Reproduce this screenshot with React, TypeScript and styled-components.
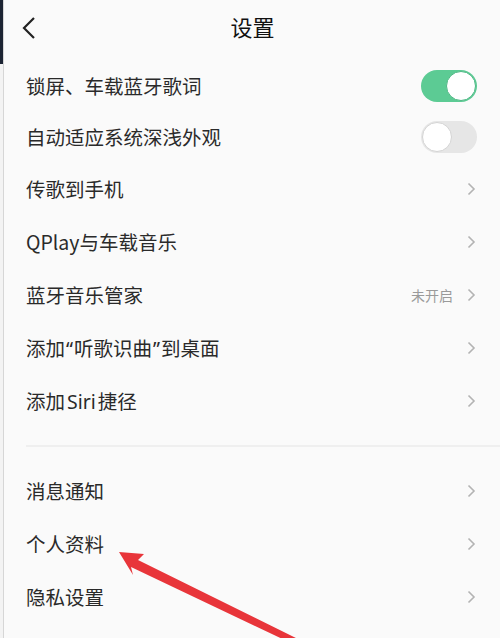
import styled, { createGlobalStyle } from "styled-components";

const GlobalStyle = createGlobalStyle`
  html, body {
    margin: 0;
    padding: 0;
    background: #fafafa;
  }
  body {
    font-family: "Noto Sans CJK SC", "Noto Sans", sans-serif;
  }
`;

const Screen = styled.div`
  position: relative;
  width: 500px;
  height: 638px;
  overflow: hidden;
  display: flex;
  background: #fafafa;
`;

const EdgeStrip = styled.div`
  width: 3px;
  flex-shrink: 0;
  display: flex;
  flex-direction: column;
  background: #f3f3f3;
  border-right: 1px solid #d6d6d6;
`;

const EdgeDark = styled.div`
  height: 64px;
  background: #1c2433;
`;

const Page = styled.div`
  flex: 1;
  display: flex;
  flex-direction: column;
`;

const Header = styled.div`
  height: 60px;
  padding-bottom: 8px;
  box-sizing: border-box;
  display: grid;
  grid-template-columns: 60px 1fr 60px;
  align-items: center;
`;

const Back = styled.div`
  padding-left: 17px;
  padding-top: 4px;
  display: flex;
  align-items: center;
`;

const Title = styled.div`
  text-align: center;
  font-size: 22px;
  color: #111;
  padding-left: 1px;
`;

const List = styled.div`
  display: flex;
  flex-direction: column;
`;

const Row = styled.div<{ $h?: number }>`
  height: ${(p) => p.$h ?? 53}px;
  display: flex;
  align-items: center;
  justify-content: space-between;
  padding: 0 24px 0 22px;
`;

const Label = styled.span`
  font-size: 19.5px;
  color: #2a2a2a;
`;

const Latin = styled.span`
  font-family: "Noto Sans", sans-serif;
  margin: 0 2px;
`;

const Quote = styled.span`
  font-family: "Noto Sans", sans-serif;
  margin: 0 1px;
`;

const Right = styled.div`
  display: flex;
  align-items: center;
  gap: 14px;
`;

const Hint = styled.span`
  font-size: 14px;
  color: #9a9a9a;
`;

const Track = styled.div<{ $on?: boolean }>`
  width: 56px;
  height: 32px;
  border-radius: 16px;
  background: ${(p) => (p.$on ? "#5ccb94" : "#e6e6e6")};
  display: flex;
  align-items: center;
  justify-content: ${(p) => (p.$on ? "flex-end" : "flex-start")};
  margin-right: -1px;
`;

const Knob = styled.div<{ $on?: boolean }>`
  width: 30px;
  height: 30px;
  margin: 1px;
  border-radius: 50%;
  background: #fff;
  box-sizing: border-box;
  border: 1.5px solid ${(p) => (p.$on ? "#4fb885" : "#d4d4d4")};
`;

const Divider = styled.div`
  height: 2px;
  margin: 18px 0 17px 22px;
  background: #efefef;
`;

const Arrow = styled.svg`
  position: absolute;
  left: 0;
  top: 0;
  pointer-events: none;
`;

const Chevron = () => (
  <svg width="9" height="14" viewBox="0 0 9 14">
    <path d="M1.5 1.5 L7 7 L1.5 12.5" fill="none" stroke="#b3b3b3" strokeWidth="1.6" />
  </svg>
);

const Toggle = ({ on }: { on?: boolean }) => (
  <Track $on={on}>
    <Knob $on={on} />
  </Track>
);

const topRows = [
  { key: "a", label: <>传歌到手机</> },
  { key: "b", label: <>QPlay与车载音乐</> },
  { key: "c", label: <>蓝牙音乐管家</>, hint: "未开启" },
  {
    key: "d",
    label: (
      <>
        添加<Quote>“</Quote>听歌识曲<Quote>”</Quote>到桌面
      </>
    ),
  },
  {
    key: "e",
    label: (
      <>
        添加<Latin>Siri</Latin>捷径
      </>
    ),
  },
];

const bottomRows = ["消息通知", "个人资料", "隐私设置"];

export default function App() {
  return (
    <>
      <GlobalStyle />
      <Screen>
        <EdgeStrip>
          <EdgeDark />
        </EdgeStrip>
        <Page>
          <Header>
            <Back>
              <svg width="16" height="24" viewBox="0 0 16 24">
                <path d="M13 2 L3 12 L13 22" fill="none" stroke="#222" strokeWidth="2.2" />
              </svg>
            </Back>
            <Title>设置</Title>
            <div />
          </Header>
          <List>
            <Row $h={51}>
              <Label>锁屏、车载蓝牙歌词</Label>
              <Toggle on />
            </Row>
            <Row $h={51}>
              <Label>自动适应系统深浅外观</Label>
              <Toggle />
            </Row>
            {topRows.map((r) => (
              <Row key={r.key}>
                <Label>{r.label}</Label>
                <Right>
                  {r.hint && <Hint>{r.hint}</Hint>}
                  <Chevron />
                </Right>
              </Row>
            ))}
            <Divider />
            {bottomRows.map((l) => (
              <Row key={l}>
                <Label>{l}</Label>
                <Chevron />
              </Row>
            ))}
          </List>
        </Page>
        <Arrow width="500" height="638" viewBox="0 0 500 638">
          <path
            d="M119 552 L144 554 L138 560 L300 640 L293 644 L131 567 L133 575 Z"
            fill="#e8353a"
          />
        </Arrow>
      </Screen>
    </>
  );
}
